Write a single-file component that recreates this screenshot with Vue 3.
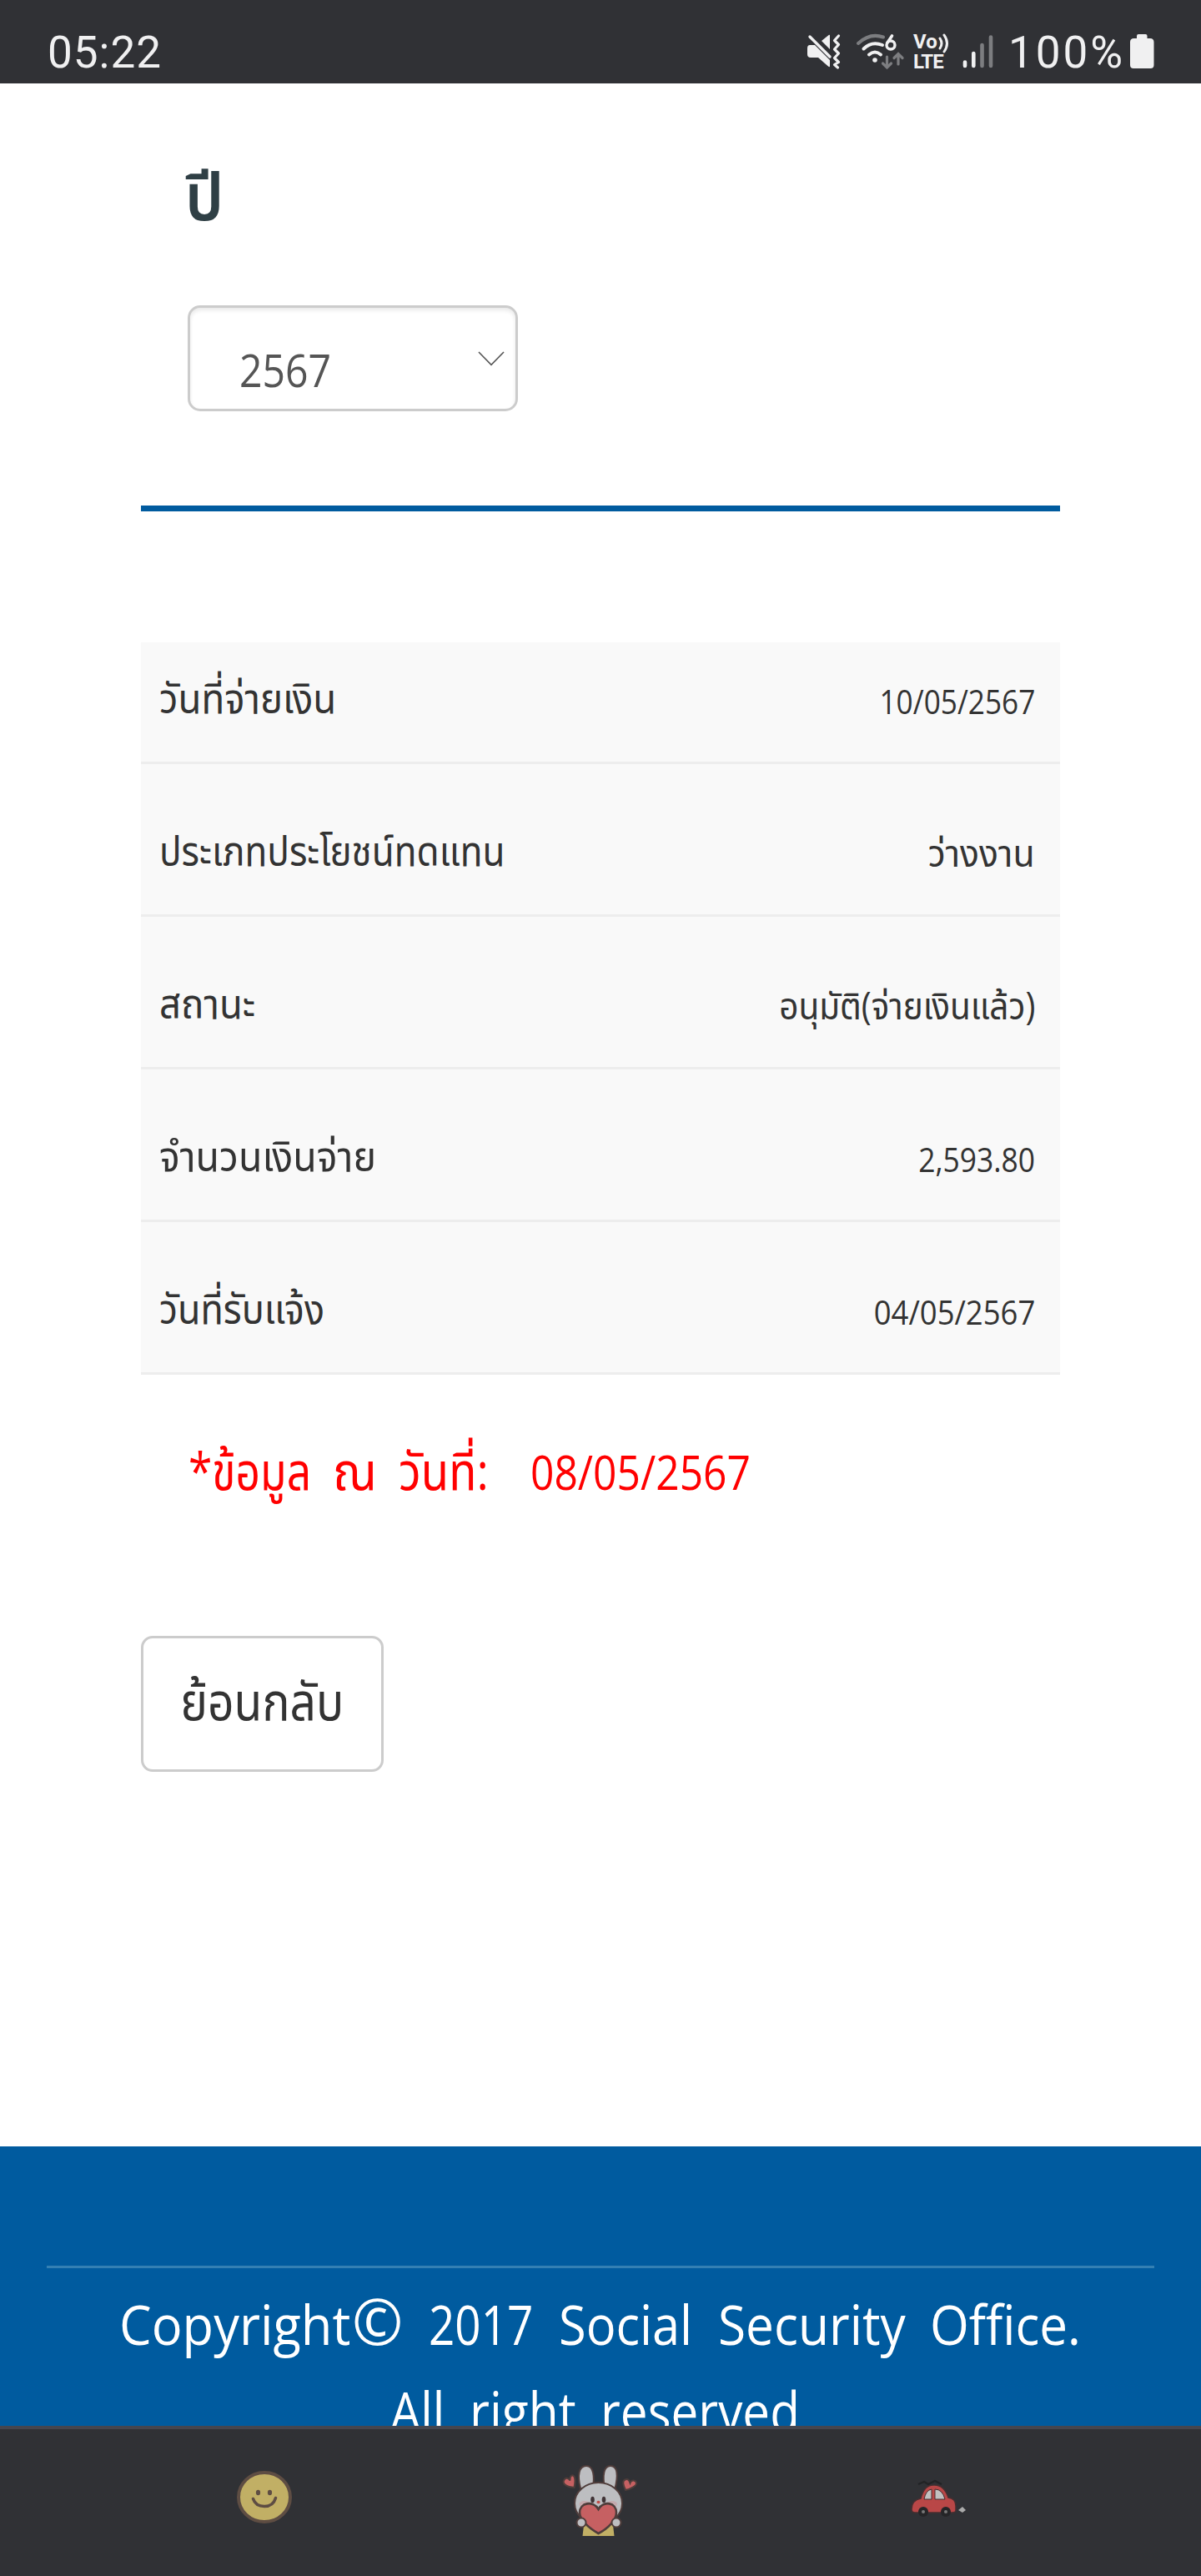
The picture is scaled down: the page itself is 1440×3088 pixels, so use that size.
<script setup>
// fit: horizontal condensing applied to each piece of text
const rows = [
  { label: 'วันที่จ่ายเงิน', fit: 0.912, value: '10/05/2567', valueFit: 0.88 },
  { label: 'ประเภทประโยชน์ทดแทน', fit: 0.88, value: 'ว่างงาน', valueFit: 0.95, thai: true },
  { label: 'สถานะ', fit: 0.91, value: 'อนุมัติ(จ่ายเงินแล้ว)', valueFit: 0.9, thai: true },
  { label: 'จำนวนเงินจ่าย', fit: 0.93, value: '2,593.80', valueFit: 0.885 },
  { label: 'วันที่รับแจ้ง', fit: 0.897, value: '04/05/2567', valueFit: 0.912 },
]
const note = [
  { text: '*ข้อมูล', width: 173, fit: 0.83 },
  { text: 'ณ', width: 79, fit: 0.94 },
  { text: 'วันที่:', width: 158, fit: 0.88 },
]
const copyright = [
  { text: '2017', width: 156, fit: 0.83 },
  { text: 'Social', width: 191, fit: 0.902 },
  { text: 'Security', width: 254, fit: 0.915 },
  { text: 'Office.', width: 176, fit: 0.912 },
]
const rights = [
  { text: 'All', width: 95, fit: 0.87 },
  { text: 'right', width: 157, fit: 0.89 },
  { text: 'reserved', width: 234, fit: 0.885 },
]
const scale = (fit) => ({ transform: `scaleX(${fit})` })
const word = (w) => ({ width: `${w.width}px`, transform: `scaleX(${w.fit})` })
</script>

<template>
  <div class="screen">
    <header class="status">
      <span class="clock">05:22</span>
      <div class="indicators">
        <svg class="mute" width="40" height="44" viewBox="0 0 40 44">
          <path d="M17 9 26 1.800q1-.5 1 .8V19ZM3 14h6l18 18v7q0 2-2 .6L13 29H4q-4 0-4-4v-7q0-4 3-4Z" fill="#f0f0f1" />
          <path d="M3 4 27 28" stroke="#f0f0f1" stroke-width="3.400" stroke-linecap="round" />
          <path d="m37.500 3-5 5.500 5 5-5 5.500 5 5-5 5.500 5 5-5 3 4 3.500" fill="none" stroke="#f0f0f1" stroke-width="3.200" stroke-linecap="round" stroke-linejoin="round" />
        </svg>
        <svg class="wifi" width="58" height="44" viewBox="0 0 58 44">
          <g fill="none" stroke-width="4" stroke-linecap="round">
            <path d="M2 12Q16-1 32 4.500" stroke="#7c7d80" />
            <path d="M8.500 18.500Q18 9 31 14M15 25.500q7-6 14 0" stroke="#f0f0f1" />
            <path d="M36.500 28v13m-5-5 5 5 5-5M50 37V24.500m-5 5 5-5 5 5" stroke="#7c7d80" stroke-width="3.200" />
          </g>
          <circle cx="22" cy="32" r="2.800" fill="#f0f0f1" />
          <path d="M42.500 3 36.800 11.500" stroke="#f0f0f1" stroke-width="3.600" stroke-linecap="round" />
          <circle cx="41" cy="14" r="5" fill="none" stroke="#f0f0f1" stroke-width="3.400" />
        </svg>
        <div class="volte">
          <span class="vo">Vo<svg width="14" height="24" viewBox="0 0 14 24"><path d="M3 6q4 6 0 12M8 2q7 10 0 20" fill="none" stroke="#f0f0f1" stroke-width="3" stroke-linecap="round" /></svg></span>
          <span class="lte">LTE</span>
        </div>
        <svg class="signal" width="37" height="44" viewBox="0 0 37 44">
          <g stroke-width="4.600" stroke-linecap="round">
            <path d="M3 34.500v4.500M13.300 24v15" stroke="#f0f0f1" />
            <path d="M23.500 14v25M34 4.500v34.500" stroke="#7c7d80" />
          </g>
        </svg>
        <span class="percent">100%</span>
        <svg class="battery" width="29" height="44" viewBox="0 0 29 44">
          <path d="M8 6V3q0-2 2-2h8.500q2 0 2 2v3H24q4.500 0 4.500 4.500V38q0 4-4 4H4q-4 0-4-4V10.500Q0 6 4.500 6Z" fill="#f0f0f1" />
        </svg>
      </div>
    </header>

    <main class="content">
      <h1 class="title">ปี</h1>
      <div class="select">
        <span class="year">2567</span>
        <svg width="32" height="18" viewBox="0 0 32 18"><path d="m1 1 15 15.300L31 1" fill="none" stroke="#555" stroke-width="1.600" /></svg>
      </div>
      <div class="rule"></div>
      <div class="table">
        <div v-for="row in rows" :key="row.label" class="row">
          <span class="label" :style="scale(row.fit)">{{ row.label }}</span>
          <span class="value" :class="{ thai: row.thai }" :style="scale(row.valueFit)">{{ row.value }}</span>
        </div>
      </div>
      <p class="note">
        <span v-for="w in note" :key="w.text" :style="word(w)">{{ w.text }}</span>
        <span class="date">08/05/2567</span>
      </p>
      <button class="back" type="button"><span>ย้อนกลับ</span></button>
    </main>

    <footer class="footer">
      <div class="line"></div>
      <p class="copy">
        <span class="brand"><span class="brand-word">Copyright</span><span class="mark">©</span></span>
        <span v-for="w in copyright" :key="w.text" :style="word(w)">{{ w.text }}</span>
      </p>
      <p class="copy second">
        <span v-for="w in rights" :key="w.text" :style="word(w)">{{ w.text }}</span>
      </p>
    </footer>

    <nav class="nav">
      <svg class="smile" width="68" height="66" viewBox="0 0 68 66">
        <ellipse cx="34" cy="32.500" rx="31" ry="29.500" fill="#c1af65" stroke="#5e4d43" stroke-width="4" />
        <ellipse cx="26.500" cy="27" rx="2.600" ry="3.300" fill="#5e4d43" />
        <ellipse cx="40.500" cy="27" rx="2.600" ry="3.300" fill="#5e4d43" />
        <path d="M20.500 34.500q3 9 13.500 9t13.500-10" fill="none" stroke="#5e4d43" stroke-width="3.600" stroke-linecap="round" />
      </svg>
      <svg class="bunny" width="92" height="90" viewBox="0 0 92 90">
        <g stroke="#4f3d3b" stroke-width="2">
          <path d="M26 73h35l1.500 13h-38Z" fill="#c1af65" stroke="none" />
          <path d="M22 29C18 13 20 2 29 2s10 13 8 27ZM51 29C48 13 50 2 58 2s10 10 5 29Z" fill="#bdbec1" />
          <ellipse cx="43.500" cy="47" rx="28.500" ry="25" fill="#bdbec1" />
          <g fill="#c3a9ad" stroke="none"><ellipse cx="27" cy="48" rx="6.500" ry="4" /><ellipse cx="59.500" cy="48" rx="6.500" ry="4" /></g>
          <g fill="#403336" stroke="none"><ellipse cx="36.500" cy="42.500" rx="2.300" ry="3.800" /><ellipse cx="50" cy="42.500" rx="2.300" ry="3.800" /></g>
          <ellipse cx="43.500" cy="45.500" rx="2" ry="1.700" fill="#c04c48" stroke="none" />
          <path d="M43.500 83C31 76 21 66 21 58c0-12 16-15 22.500-4C50 43 65 46 65 58c0 9-10 19-21.500 25Z" fill="#c66062" stroke-width="2.600" />
          <circle cx="23" cy="70" r="5.500" fill="#bdbec1" /><circle cx="65" cy="70" r="5.500" fill="#bdbec1" />
          <path d="M14.500 28C6 27 0 24 2 19.500s6-3 7.500 0C9 13 13 12 14.500 15s1 8 0 13Z" fill="#c66062" />
          <path d="M76 31C73 25 72 20 75.500 18.500s5 1 6 4c2-5 7-3 7.500 0s-6 7-13 8.500Z" fill="#c66062" />
        </g>
      </svg>
      <svg class="car" width="68" height="52" viewBox="0 0 68 52">
        <path d="M12 24Q16 8 27 8q13-1 18 15 9 1 9 10v5q0 3-4 3H5q-4 0-4-4 0-11 11-13Z" fill="#b94747" stroke="#472e30" stroke-width="1.500" />
        <path d="M16 25q2-11 9-12v12ZM29 13q9 0 12 12H29Z" fill="#c2c0c0" stroke="#472e30" />
        <path d="M9 7l7-3 5 3 8-4 8 4" fill="none" stroke="#222325" stroke-width="2.400" />
        <circle cx="15" cy="40" r="6" fill="#252527" /><circle cx="42" cy="40" r="6" fill="#252527" />
        <circle cx="15" cy="40" r="2" fill="#777" /><circle cx="42" cy="40" r="2" fill="#777" />
        <path d="M57 38l5-4 4 4-4 3Z" fill="#aaa" />
      </svg>
    </nav>
  </div>
</template>

<style>
body { margin: 0; }
</style>

<style scoped>
.screen { width: 1440px; height: 3088px; display: flex; flex-direction: column; overflow: hidden; background: #fff; color: #333; font-family: "Open Sans", "Noto Sans Thai", "Noto Sans", sans-serif; }
.screen * { box-sizing: border-box; }
p, h1 { margin: 0; white-space: nowrap; }
.status { height: 100px; flex: none; display: flex; justify-content: space-between; align-items: flex-start; padding: 40px 56px 0 57px; background: #303135; color: #f0f0f1; font-family: Roboto, sans-serif; }
.clock, .percent { font-size: 53px; line-height: 46px; }
.clock { letter-spacing: 1px; }
.indicators { display: flex; height: 44px; align-items: flex-start; }
.wifi { margin-left: 19px; }
.volte { width: 43px; margin-left: 10px; display: flex; flex-direction: column; font: 700 24px/21px Roboto, sans-serif; }
.vo { display: flex; height: 22px; }
.lte { line-height: 25px; letter-spacing: -1px; }
.signal { margin-left: 16px; }
.percent { margin-left: 18px; width: 138px; letter-spacing: 3px; }
.battery { margin-left: 8px; }
.content { height: 2473px; flex: none; display: flex; flex-direction: column; padding: 0 169px; }
.title { margin: 83px 0 0 53px; height: 102px; font-size: 78px; line-height: 102px; font-weight: 600; color: #2f3f45; transform: scaleX(.95); transform-origin: left; }
.select { width: 396px; height: 127px; margin: 81px 0 0 56px; border: 3px solid #ccc; border-radius: 15px; box-shadow: inset 0 3px 5px rgba(0, 0, 0, .09); display: flex; align-items: flex-start; justify-content: space-between; padding: 36px 13px 0 59px; font-size: 55px; line-height: 75px; color: #555; }
.year { transform: scaleX(.875); transform-origin: left; }
.select svg { margin-top: 16px; }
.rule { height: 7px; margin-top: 113px; background: #005b9f; }
.table { margin-top: 157px; }
.row { display: flex; justify-content: space-between; align-items: flex-end; height: 183px; padding: 0 30px 42px 22px; background: #f9f9f9; border-bottom: 3px solid #ededed; white-space: nowrap; }
.row:first-child { height: 146px; }
.label { font-size: 50px; line-height: 70px; transform-origin: left; }
.value { font-size: 40px; line-height: 60px; transform-origin: right; }
.thai { font-size: 45px; margin-bottom: 2px; }
.note { display: flex; align-items: baseline; margin: 74px 0 0 57px; height: 80px; font-size: 62px; line-height: 80px; color: #f00; }
.note span, .copy > span { flex: none; transform-origin: left; text-align: left; }
.note .date { font-size: 56px; transform: scaleX(.888); }
.back { width: 291px; height: 163px; margin-top: 159px; padding: 0 0 10px; display: flex; align-items: center; justify-content: center; border: 3px solid #ccc; border-radius: 14px; background: #fff; color: #333; font: 62px/80px "Open Sans", "Noto Sans Thai", sans-serif; white-space: nowrap; }
.back span { transform: scaleX(.89); }
.footer { height: 335px; flex: none; overflow: hidden; background: #005b9f; color: #fff; padding: 143px 56px 0; }
.line { height: 3px; background: #3480b3; }
.copy { display: flex; align-items: baseline; height: 104px; font-size: 66px; line-height: 104px; margin-top: 14px; padding-left: 87px; }
.copy .brand { width: 371px; display: flex; align-items: baseline; }
.brand-word { width: 279px; transform: scaleX(.93); transform-origin: left; }
.mark { font-size: 76px; line-height: 90px; transform: scaleX(.97); transform-origin: left; }
.second { margin-top: 0; padding-left: 412px; }
.nav { height: 180px; flex: none; display: flex; background: #303135; border-top: 4px solid #45464f; padding-left: 283px; }
.smile { margin-top: 49px; }
.bunny { margin: 42px 0 0 323px; }
.car { margin: 59px 0 0 326px; }
</style>
